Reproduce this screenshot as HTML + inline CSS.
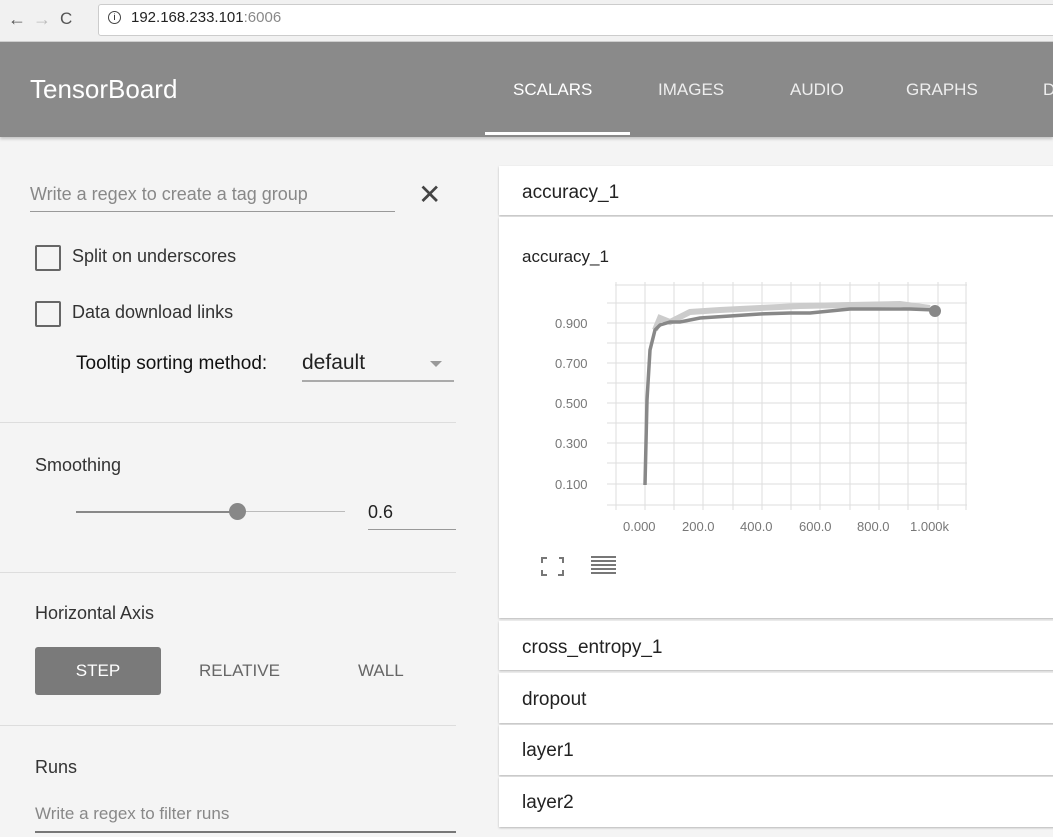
<!DOCTYPE html><html><head><style>
body{margin:0;width:1053px;height:837px;overflow:hidden;background:#f4f4f4;font-family:"Liberation Sans",sans-serif;position:relative}
.a{position:absolute}
.card{position:absolute;left:499px;width:560px;background:#fff;box-shadow:0 1px 2px rgba(0,0,0,.25);font-size:19px;color:#222}
.card span{position:absolute;left:23px}
.t{color:#fff;font-size:17px;top:80px}
</style></head><body>
<div class="a" style="left:0;top:0;width:1053px;height:41px;background:#f1f1f1;border-bottom:1px solid #d0d0d0"></div>
<div class="a" style="left:8px;top:9px;font-size:18px;color:#555">←</div>
<div class="a" style="left:33px;top:9px;font-size:18px;color:#bbb">→</div>
<div class="a" style="left:60px;top:9px;font-size:17px;color:#555">C</div>
<div class="a" style="left:98px;top:4px;width:960px;height:30px;background:#fff;border:1px solid #ccc;border-radius:3px"></div>
<div class="a" style="left:108px;top:11px;width:11px;height:11px;border:1px solid #444;border-radius:50%;font-size:9px;text-align:center;line-height:11px">i</div>
<div class="a" style="left:131px;top:9px;font-size:15px;color:#222">192.168.233.101<span style="color:#888">:6006</span></div>
<div class="a" style="left:0;top:42px;width:1053px;height:95px;background:#8a8a8a;box-shadow:0 2px 3px rgba(0,0,0,.2)"></div>
<div class="a" style="left:30px;top:74px;font-size:26px;color:#fff">TensorBoard</div>
<div class="a t" style="left:513px">SCALARS</div>
<div class="a t" style="left:658px;color:#eee">IMAGES</div>
<div class="a t" style="left:790px;color:#eee">AUDIO</div>
<div class="a t" style="left:906px;color:#eee">GRAPHS</div>
<div class="a t" style="left:1043px;color:#eee">D</div>
<div class="a" style="left:485px;top:132px;width:145px;height:3px;background:#fff"></div>
<!-- left -->
<div class="a" style="left:30px;top:184px;font-size:18px;color:#888">Write a regex to create a tag group</div>
<div class="a" style="left:30px;top:211px;width:365px;height:1px;background:#999"></div>
<div class="a" style="left:418px;top:178px;font-size:28px;color:#444">✕</div>
<div class="a" style="left:35px;top:245px;width:22px;height:22px;border:2px solid #666;border-radius:2px"></div>
<div class="a" style="left:72px;top:246px;font-size:18px;color:#333">Split on underscores</div>
<div class="a" style="left:35px;top:301px;width:22px;height:22px;border:2px solid #666;border-radius:2px"></div>
<div class="a" style="left:72px;top:302px;font-size:18px;color:#333">Data download links</div>
<div class="a" style="left:76px;top:353px;font-size:19px;color:#111">Tooltip sorting method:</div>
<div class="a" style="left:302px;top:351px;font-size:21px;color:#222">default</div>
<div class="a" style="left:430px;top:361px;border:6px solid transparent;border-top:6px solid #999"></div>
<div class="a" style="left:302px;top:380px;width:152px;height:2px;background:#aaa"></div>
<div class="a" style="left:0;top:422px;width:456px;height:1px;background:#ddd"></div>
<div class="a" style="left:35px;top:455px;font-size:18px;color:#333">Smoothing</div>
<div class="a" style="left:76px;top:511px;width:161px;height:2px;background:#888"></div>
<div class="a" style="left:237px;top:511px;width:108px;height:1px;background:#bbb"></div>
<div class="a" style="left:229px;top:503px;width:17px;height:17px;border-radius:50%;background:#888"></div>
<div class="a" style="left:368px;top:502px;font-size:18px;color:#222">0.6</div>
<div class="a" style="left:368px;top:529px;width:88px;height:1px;background:#999"></div>
<div class="a" style="left:0;top:572px;width:456px;height:1px;background:#ddd"></div>
<div class="a" style="left:35px;top:603px;font-size:18px;color:#333">Horizontal Axis</div>
<div class="a" style="left:35px;top:647px;width:126px;height:48px;background:#7a7a7a;border-radius:3px;color:#fff;font-size:17px;text-align:center;line-height:48px">STEP</div>
<div class="a" style="left:199px;top:661px;font-size:17px;color:#666">RELATIVE</div>
<div class="a" style="left:358px;top:661px;font-size:17px;color:#666">WALL</div>
<div class="a" style="left:0;top:725px;width:456px;height:1px;background:#ddd"></div>
<div class="a" style="left:35px;top:757px;font-size:18px;color:#333">Runs</div>
<div class="a" style="left:35px;top:804px;font-size:17px;color:#888">Write a regex to filter runs</div>
<div class="a" style="left:35px;top:831px;width:421px;height:2px;background:#777"></div>
<!-- right -->
<div class="card" style="top:166px;height:49px"><span style="top:16px">accuracy_1</span></div>
<div class="card" style="top:217px;height:401px">
<span style="top:30px;font-size:17px">accuracy_1</span>
<svg class="a" style="left:0;top:0" width="560" height="401">
<g stroke="#ddd" stroke-width="1" transform="translate(-499,-217)">
<path d="M615 285H967M607 303H967M607 323H967M607 343H967M607 363H967M607 383H967M607 403H967M607 423H967M607 443H967M607 463H967M607 484H967M607 505H967"/>
<path d="M616 282V510M645 282V510M674 282V510M703 282V510M733 282V510M762 282V510M791 282V510M820 282V510M850 282V510M879 282V510M908 282V510M938 282V510M966 282V510"/>
<path d="M655 330L660 318L670 322L690 312L720 310L760 308L800 306L850 305L900 304L930 308" stroke="#ccc" stroke-width="6" fill="none"/>
<path d="M645 485L647 400L650 350L655 330L660 325L670 322L680 322L700 318L730 316L760 314L790 313L810 313L830 311L850 309L880 309L910 309L935 310" stroke="#888" stroke-width="3.5" fill="none"/>
<circle cx="935" cy="311" r="6" fill="#888" stroke="none"/>
</g>
<g font-size="13" fill="#777" font-family="Liberation Sans">
<text x="56" y="111">0.900</text><text x="56" y="151">0.700</text><text x="56" y="191">0.500</text><text x="56" y="231">0.300</text><text x="56" y="272">0.100</text>
<text x="124" y="314">0.000</text><text x="183" y="314">200.0</text><text x="241" y="314">400.0</text><text x="300" y="314">600.0</text><text x="358" y="314">800.0</text><text x="411" y="314">1.000k</text>
</g>
<path d="M43 346v-5h5M60 341h4v5M43 353v5h5M64 353v5h-5" stroke="#777" stroke-width="2" fill="none"/>
<path d="M92 340h25M92 344h25M92 348h25M92 352h25M92 356h25" stroke="#777" stroke-width="2"/>
</svg></div>
<div class="card" style="top:621px;height:49px"><span style="top:16px">cross_entropy_1</span></div>
<div class="card" style="top:673px;height:50px"><span style="top:16px">dropout</span></div>
<div class="card" style="top:725px;height:50px"><span style="top:15px">layer1</span></div>
<div class="card" style="top:777px;height:50px"><span style="top:15px">layer2</span></div>
</body></html>
